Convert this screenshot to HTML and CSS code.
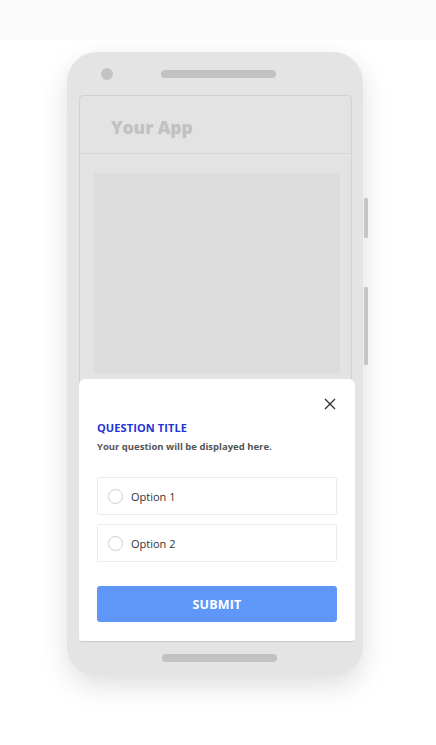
FILE: index.html
```html
<!DOCTYPE html>
<html>
<head>
<meta charset="utf-8">
<link rel="stylesheet" href="styles.css">
</head>
<body>
<div class="stage">
  <div class="phone">
    <span class="side-btn side-btn--top"></span>
    <span class="side-btn side-btn--bottom"></span>
    <div class="phone-top">
      <span class="camera"></span>
      <span class="speaker"></span>
    </div>
    <div class="screen">
      <div class="app-header">Your App</div>
      <div class="app-body">
        <div class="placeholder"></div>
      </div>
      <div class="modal">
        <div class="modal-close">
          <svg width="12" height="12" viewBox="0 0 12 12"><path d="M1 1 L11 11 M11 1 L1 11" stroke="#333" stroke-width="1.4" fill="none"/></svg>
        </div>
        <div class="q-title">QUESTION TITLE</div>
        <div class="q-text">Your question will be displayed here.</div>
        <div class="options">
          <label class="option"><span class="radio"></span><span class="opt-label">Option 1</span></label>
          <label class="option"><span class="radio"></span><span class="opt-label">Option 2</span></label>
        </div>
        <button class="submit">SUBMIT</button>
      </div>
    </div>
    <div class="phone-bottom">
      <span class="speaker"></span>
    </div>
  </div>
</div>
</body>
</html>
```
FILE: styles.css
```css
html, body {
  margin: 0;
  padding: 0;
}
body {
  width: 436px;
  height: 745px;
  background: linear-gradient(#fafafa 0, #fafafa 40px, #ffffff 40px);
  font-family: "Open Sans", sans-serif;
  overflow: hidden;
}
.stage {
  padding: 52px 0 0 67px;
}
.phone {
  position: relative;
  width: 296px;
  height: 624px;
  box-sizing: border-box;
  background: #e4e4e4;
  border-radius: 30px;
  box-shadow: 0 10px 28px rgba(0, 0, 0, 0.13);
  display: flex;
  flex-direction: column;
  padding: 0 11px 0 12px;
}
.side-btn {
  position: absolute;
  right: -5px;
  width: 4px;
  background: #c6c6c6;
  border-radius: 1px;
}
.side-btn--top { top: 146px; height: 40px; }
.side-btn--bottom { top: 235px; height: 78px; }
.phone-top {
  height: 43px;
  display: flex;
  align-items: center;
  padding-left: 22px;
}
.camera {
  width: 12px;
  height: 12px;
  border-radius: 50%;
  background: #c4c4c4;
  margin-top: 1px;
}
.speaker {
  display: block;
  width: 115px;
  height: 8px;
  border-radius: 4px;
  background: #c2c2c2;
}
.phone-top .speaker {
  margin-left: 48px;
  margin-top: 1px;
}
.screen {
  position: relative;
  height: 546px;
  box-sizing: border-box;
  border: 1px solid #d2d2d2;
  border-radius: 4px;
  background: #e3e3e3;
}
.app-header {
  height: 58px;
  box-sizing: border-box;
  border-bottom: 1px solid #d6d6d6;
  padding: 19px 0 0 31px;
  font-family: "Open Sans", sans-serif;
  font-weight: 800;
  font-size: 17.5px;
  color: #c1c1c1;
  letter-spacing: -0.1px;
}
.app-body {
  padding: 19px 11px 0 14px;
}
.placeholder {
  height: 200px;
  background: #dcdcdc;
}
.modal {
  position: absolute;
  left: -1px;
  right: -4px;
  bottom: -1px;
  height: 262px;
  box-sizing: border-box;
  background: #ffffff;
  border-radius: 6px 6px 3px 3px;
  box-shadow: 0 1px 1px rgba(0, 0, 0, 0.12);
  padding: 19px 18px 0 18px;
  display: flex;
  flex-direction: column;
}
.modal-close {
  align-self: flex-end;
  width: 12px;
  height: 12px;
  margin-right: 1px;
}
.modal-close svg { display: block; }
.q-title {
  margin-top: 10px;
  font-size: 11px;
  font-weight: 700;
  color: #1f33d6;
  line-height: 15px;
  letter-spacing: 0.1px;
}
.q-text {
  margin-top: 5px;
  font-size: 9.5px;
  font-weight: 700;
  color: #555555;
  line-height: 13px;
}
.options {
  margin-top: 24px;
  display: flex;
  flex-direction: column;
  gap: 9px;
}
.option {
  height: 38px;
  box-sizing: border-box;
  border: 1px solid #ebebeb;
  border-radius: 2px;
  display: flex;
  align-items: center;
  padding-left: 10px;
}
.radio {
  width: 13px;
  height: 13px;
  border: 1px solid #cfcfcf;
  border-radius: 50%;
}
.opt-label {
  margin-left: 8px;
  font-size: 11px;
  color: #333333;
}
.submit {
  margin-top: 24px;
  height: 36px;
  border: none;
  border-radius: 3px;
  background: #5e97f7;
  color: #ffffff;
  font-family: "Open Sans", sans-serif;
  font-weight: 700;
  font-size: 12.5px;
  letter-spacing: 0.2px;
  padding: 0;
}
.phone-bottom {
  flex: 1;
  display: flex;
  align-items: center;
  justify-content: center;
  padding-bottom: 2px;
}
.phone-bottom .speaker {
  margin-left: 8px;
}
```
